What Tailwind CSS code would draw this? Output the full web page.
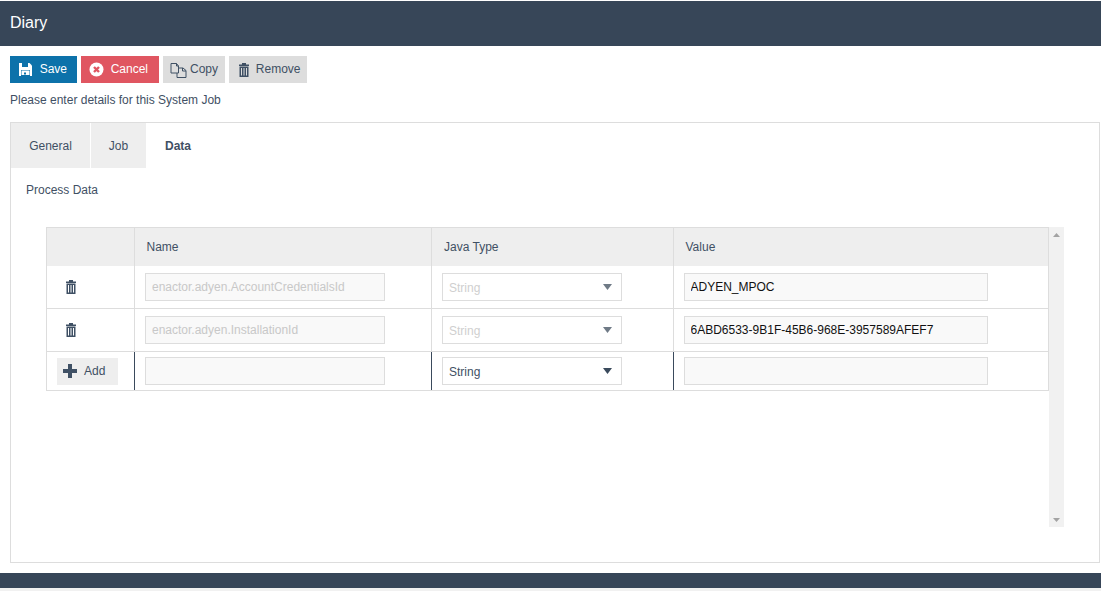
<!DOCTYPE html>
<html>
<head>
<meta charset="utf-8">
<script src="https://cdn.jsdelivr.net/npm/@tailwindcss/browser@4"></script>
</head>
<body class="bg-white font-['Liberation_Sans',Arial,sans-serif] text-[12px] leading-[16px] text-[#3f5064] h-[591px] w-[1101px] overflow-hidden">
<div class="flex flex-col h-[591px]">
  <header class="mt-px h-[45px] bg-[#374658] text-white text-[16px] flex items-center px-[10px] pb-[2px]">Diary</header>
  <div class="flex gap-[4px] px-[10px] pt-[10px]">
    <button class="h-[27px] w-[67px] bg-[#0d72aa] text-white flex items-center pl-[9px] pr-[10px] justify-between">
      <svg width="13" height="13" viewBox="0 0 13 13"><path fill="#fff" d="M0 0h10.5L13 2.5V13H0z"/><rect x="3" y="0" width="6" height="4" fill="#0d72aa"/><rect x="2" y="7" width="9" height="6" fill="#0d72aa"/><rect x="2.5" y="7.5" width="8" height="4.5" fill="#fff"/><rect x="5" y="9.5" width="2" height="2" fill="#0d72aa"/></svg>
      <span class="pb-[2px]">Save</span>
    </button>
    <button class="h-[27px] w-[78px] bg-[#e05661] text-white flex items-center pl-[8px] pr-[11px] justify-between">
      <svg width="15" height="15" viewBox="0 0 15 15"><circle cx="7.5" cy="7.5" r="7" fill="#fff"/><path d="M5 5l5 5M10 5l-5 5" stroke="#e05661" stroke-width="2.4"/></svg>
      <span class="pb-[2px]">Cancel</span>
    </button>
    <button class="h-[27px] w-[62px] bg-[#dddddd] flex items-center pl-[7px] pr-[7px] justify-between">
      <svg width="17" height="16" viewBox="0 0 17 16" fill="none" stroke="#3f5064"><path d="M1 1.5h5.5l2 2.5v7H1z"/><path d="M6.5 1.5V4h2"/><path d="M8.5 6h4.5l3 2.5v7H7V11"/><path d="M12.5 6v3h3.5"/></svg>
      <span class="pb-[2px]">Copy</span>
    </button>
    <button class="h-[27px] w-[78px] bg-[#dddddd] flex items-center pl-[10px] pr-[6.5px] justify-between">
      <svg width="10" height="14" viewBox="0 0 10 14"><path fill="#3f5064" d="M0 1.5h3V0h4v1.5h3V3H0zM.5 3.5h9V14h-9z"/><path stroke="#dddddd" d="M2.5 5v7.5M5 5v7.5M7.5 5v7.5"/></svg>
      <span class="pb-[2px]">Remove</span>
    </button>
  </div>
  <p class="mt-[9px] px-[10px]">Please enter details for this System Job</p>
  <section class="mt-[14px] ml-[10px] w-[1090px] h-[441px] border border-[#dddddd] flex flex-col">
    <nav class="flex h-[45px]">
      <div class="w-[79px] bg-[#eeeeee] flex items-center justify-center">General</div>
      <div class="w-[55px] ml-px bg-[#eeeeee] flex items-center justify-center">Job</div>
      <div class="w-[64px] flex items-center justify-center font-bold">Data</div>
    </nav>
    <p class="mt-[14px] ml-[15px]">Process Data</p>
    <div class="mt-[29px] ml-[35px] flex items-start">
      <div class="w-[1003px] border-x border-b border-t border-[#dddddd]">
        <div class="grid grid-cols-[87px_1px_296px_1px_241px_1px_374px] h-[38px] bg-[#eeeeee]">
          <div></div><div class="bg-[#dddddd]"></div>
          <div class="pl-[11.5px] flex items-center">Name</div><div class="bg-[#dddddd]"></div>
          <div class="pl-[12px] flex items-center">Java Type</div><div class="bg-[#dddddd]"></div>
          <div class="pl-[11.5px] flex items-center">Value</div>
        </div>
        <div class="grid grid-cols-[87px_1px_296px_1px_241px_1px_374px] h-[43px] border-b border-[#dddddd] pb-0">
          <div class="pl-[19px] pt-[14px]">
            <svg width="10" height="14" viewBox="0 0 10 14"><path fill="#3f5064" d="M0 1.5h3V0h4v1.5h3V3H0zM.5 3.5h9V14h-9z"/><path stroke="#ffffff" d="M2.5 5v7.5M5 5v7.5M7.5 5v7.5"/></svg>
          </div>
          <div class="bg-[#dddddd]"></div>
          <div class="pl-[10px] pt-[7px]"><input disabled value="enactor.adyen.AccountCredentialsId" class="w-[240px] h-[28px] border border-[#dddddd] bg-[#f9f9f9] px-[6px] text-[#c8c8c8]"></div>
          <div class="bg-[#dddddd]"></div>
          <div class="pl-[10px] pt-[7px]"><div class="w-[180px] h-[28px] border border-[#dddddd] flex items-center justify-between pl-[6px] pr-[9px] text-[#cfcfcf]"><span class="pt-[1px]">String</span><svg width="9" height="6" viewBox="0 0 9 6"><path fill="#6f7a86" d="M0 0h9L4.5 6z"/></svg></div></div>
          <div class="bg-[#dddddd]"></div>
          <div class="pl-[10px] pt-[7px]"><input readonly value="ADYEN_MPOC" class="w-[304px] h-[28px] border border-[#dddddd] bg-[#f9f9f9] pl-[5.5px] pr-[6px] text-[#111111]"></div>
        </div>
        <div class="grid grid-cols-[87px_1px_296px_1px_241px_1px_374px] h-[43px] border-b border-[#dddddd]">
          <div class="pl-[19px] pt-[14px]">
            <svg width="10" height="14" viewBox="0 0 10 14"><path fill="#3f5064" d="M0 1.5h3V0h4v1.5h3V3H0zM.5 3.5h9V14h-9z"/><path stroke="#ffffff" d="M2.5 5v7.5M5 5v7.5M7.5 5v7.5"/></svg>
          </div>
          <div class="bg-[#dddddd]"></div>
          <div class="pl-[10px] pt-[7px]"><input disabled value="enactor.adyen.InstallationId" class="w-[240px] h-[28px] border border-[#dddddd] bg-[#f9f9f9] px-[6px] text-[#c8c8c8]"></div>
          <div class="bg-[#dddddd]"></div>
          <div class="pl-[10px] pt-[7px]"><div class="w-[180px] h-[28px] border border-[#dddddd] flex items-center justify-between pl-[6px] pr-[9px] text-[#cfcfcf]"><span class="pt-[1px]">String</span><svg width="9" height="6" viewBox="0 0 9 6"><path fill="#6f7a86" d="M0 0h9L4.5 6z"/></svg></div></div>
          <div class="bg-[#dddddd]"></div>
          <div class="pl-[10px] pt-[7px]"><input readonly value="6ABD6533-9B1F-45B6-968E-3957589AFEF7" class="w-[304px] h-[28px] border border-[#dddddd] bg-[#f9f9f9] pl-[5.5px] pr-[6px] text-[#111111]"></div>
        </div>
        <div class="grid grid-cols-[87px_1px_296px_1px_241px_1px_374px] h-[38px]">
          <div class="pl-[10px] pt-[6px]">
            <button class="w-[61px] h-[27px] bg-[#eeeeee] flex items-center pl-[6px] gap-[7px]">
              <svg class="mb-[1px]" width="14" height="14" viewBox="0 0 14 14"><path fill="#3f5064" d="M5 0h4v5h5v4H9v5H5V9H0V5h5z"/></svg>
              <span class="pb-[2px]">Add</span>
            </button>
          </div>
          <div class="bg-[#3a4a5c]"></div>
          <div class="pl-[10px] pt-[5px]"><input class="w-[240px] h-[28px] border border-[#dddddd] bg-[#f9f9f9] px-[6px]"></div>
          <div class="bg-[#3a4a5c]"></div>
          <div class="pl-[10px] pt-[5px]"><div class="w-[180px] h-[28px] border border-[#dddddd] flex items-center justify-between pl-[6px] pr-[9px]"><span class="pt-[1px]">String</span><svg width="9" height="6" viewBox="0 0 9 6"><path fill="#3a4a5c" d="M0 0h9L4.5 6z"/></svg></div></div>
          <div class="bg-[#3a4a5c]"></div>
          <div class="pl-[10px] pt-[5px]"><input class="w-[304px] h-[28px] border border-[#dddddd] bg-[#f9f9f9] px-[6px]"></div>
        </div>
      </div>
      <div class="w-[15px] h-[300px] bg-[#f1f1f1] flex flex-col justify-between items-center pt-[6px] pb-[5px]">
        <svg width="7" height="4" viewBox="0 0 7 4"><path fill="#a3a3a3" d="M3.5 0L7 4H0z"/></svg>
        <svg width="7" height="4" viewBox="0 0 7 4"><path fill="#a3a3a3" d="M0 0h7L3.5 4z"/></svg>
      </div>
    </div>
  </section>
  <div class="mt-[10px] h-[15px] bg-[#374658]"></div>
  <div class="flex-1 bg-[#f1f1f1]"></div>
</div>
</body>
</html>
